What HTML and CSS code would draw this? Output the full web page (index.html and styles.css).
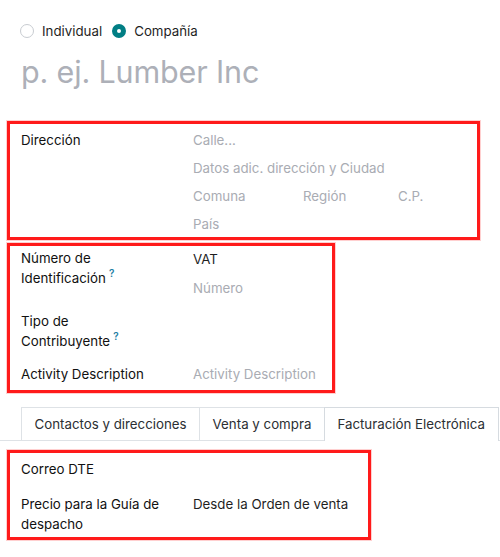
FILE: index.html
```html
<!DOCTYPE html>
<html lang="es">
<head>
<meta charset="utf-8">
<link rel="stylesheet" href="styles.css">
</head>
<body>
<div class="sheet">
  <div class="type-row">
    <label class="radio"><span class="dot"></span>Individual</label>
    <label class="radio"><span class="dot on"></span>Compañía</label>
  </div>
  <div class="title">p. ej. Lumber Inc</div>

  <div class="box box-addr">
    <div class="lbl">Dirección</div>
    <div class="addr">
      <div class="ph">Calle...</div>
      <div class="ph">Datos adic. dirección y Ciudad</div>
      <div class="addr3">
        <span class="ph">Comuna</span>
        <span class="ph">Región</span>
        <span class="ph">C.P.</span>
      </div>
      <div class="ph">País</div>
    </div>
  </div>

  <div class="box box-id">
    <div class="lbl">Número de Identificación<sup class="q">?</sup></div>
    <div class="vat">
      <div class="val">VAT</div>
      <div class="ph num">Número</div>
    </div>
    <div class="lbl">Tipo de Contribuyente<sup class="q">?</sup></div>
    <div></div>
    <div class="lbl">Activity Description</div>
    <div class="ph">Activity Description</div>
  </div>

  <div class="tabs">
    <div class="tab">Contactos y direcciones</div>
    <div class="tab">Venta y compra</div>
    <div class="tab active">Facturación Electrónica</div>
  </div>

  <div class="box box-dte">
    <div class="lbl">Correo DTE</div>
    <div></div>
    <div class="lbl">Precio para la Guía de despacho</div>
    <div class="val">Desde la Orden de venta</div>
  </div>
</div>
</body>
</html>
```
FILE: styles.css
```css
html, body {
  margin: 0;
  padding: 0;
  background: #fff;
}
body {
  font-family: "Inter", "Roboto", sans-serif;
  font-size: 13.3px;
  line-height: 20px;
  color: #1f1f1f;
}
.sheet {
  width: 500px;
  height: 557px;
  overflow: hidden;
}
.type-row {
  display: flex;
  gap: 10px;
  padding: 21px 0 0 20px;
  height: 20px;
}
.radio {
  display: flex;
  align-items: center;
  gap: 8px;
  color: #1f1f1f;
}
.dot {
  width: 12px;
  height: 12px;
  border: 1px solid #c8ccd1;
  border-radius: 50%;
  box-sizing: content-box;
}
.dot.on {
  width: 4px;
  height: 4px;
  border: 5px solid #017e84;
}
.title {
  margin: 11px 0 0 21px;
  font-size: 30.5px;
  line-height: 40px;
  color: #adb0b8;
  letter-spacing: -0.15px;
}
.box {
  border: 3px solid #ff1a1a;
  box-shadow: 0 0 0 1px rgba(255, 120, 120, 0.35);
  margin-left: 7px;
  display: grid;
  grid-template-columns: 172px 1fr;
  padding-left: 11px;
}
.box-addr {
  margin-top: 29px;
  width: 456px;
  padding-top: 6px;
  padding-bottom: 3px;
}
.addr {
  display: flex;
  flex-direction: column;
  gap: 8px;
}
.addr3 {
  display: grid;
  grid-template-columns: 110px 95px 1fr;
}
.ph {
  color: #a9acb3;
}
.val {
  color: #1f1f1f;
}
.lbl {
  color: #111;
  max-width: 146px;
}
.q {
  color: #1d7ea3;
  font-size: 10px;
  line-height: 0;
  font-weight: 600;
  margin-left: 3px;
  vertical-align: 6px;
}
.box-id {
  margin-top: 3px;
  width: 311px;
  padding-top: 2px;
  padding-bottom: 6px;
  row-gap: 13px;
}
.vat .val {
  margin-top: 1px;
}
.num {
  margin-top: 9px;
}
.tabs {
  margin-top: 14px;
  display: flex;
  padding-left: 21px;
  border-bottom: 1px solid #dee2e6;
  height: 33px;
}
.tab {
  border: 1px solid #dee2e6;
  border-bottom: none;
  padding: 6px 12.5px 0 12.5px;
  color: #2b2f33;
  margin-right: -1px;
  white-space: nowrap;
}
.tab.active {
  background: #fff;
  margin-bottom: -1px;
  border-color: #d6dbe0;
}
.box-dte {
  margin-top: 9px;
  width: 347px;
  padding-top: 6px;
  padding-bottom: 3px;
  row-gap: 15px;
}
```
